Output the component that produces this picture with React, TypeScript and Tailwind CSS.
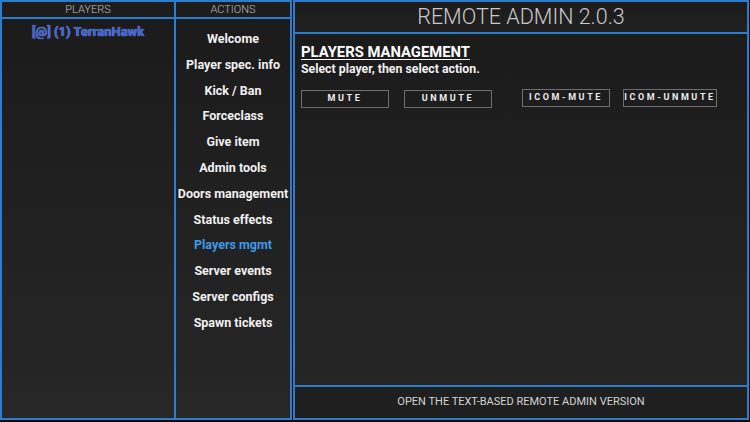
import React from 'react'

const actions = [
  'Welcome',
  'Player spec. info',
  'Kick / Ban',
  'Forceclass',
  'Give item',
  'Admin tools',
  'Doors management',
  'Status effects',
  'Players mgmt',
  'Server events',
  'Server configs',
  'Spawn tickets',
]

const ACTIVE = 'Players mgmt'

function MgmtButton({ label, className = '' }: { label: string; className?: string }) {
  return (
    <div
      className={`h-[18px] border border-[#6f6f6f] flex items-center justify-center whitespace-nowrap text-[9px] font-bold tracking-[2.6px] text-[#ececec] ${className}`}
    >
      {label}
    </div>
  )
}

export default function App() {
  return (
    <div className="w-[750px] h-[422px] bg-[#0b0b0b] flex font-['Roboto',sans-serif] overflow-hidden">
      {/* Players column */}
      <div className="w-[176px] h-[420px] flex flex-col">
        <div className="h-[19px] border-2 border-[#2d7dcd] bg-[#1d1d1d] flex items-center justify-center text-[11px] font-light text-[#bdbdbd] leading-none">
          PLAYERS
        </div>
        <div className="flex-1 border-2 border-t-0 border-[#2d7dcd] bg-linear-to-b from-[#1b1b1b] to-[#272727] pt-[5px]">
          <div className="text-center text-[13px] leading-4 font-bold text-[#3a62d9] [text-shadow:0_0_1px_#a9b9ff]">
            [@] (1) TerranHawk
          </div>
        </div>
      </div>

      {/* Actions column */}
      <div className="w-[116px] h-[420px] flex flex-col">
        <div className="h-[19px] border-2 border-l-0 border-[#2d7dcd] bg-[#1d1d1d] flex items-center justify-center text-[11px] font-light text-[#bdbdbd] leading-none">
          ACTIONS
        </div>
        <div className="flex-1 border-2 border-t-0 border-l-0 border-[#2d7dcd] bg-linear-to-b from-[#1b1b1b] to-[#272727] pt-[7px] flex flex-col items-center">
          {actions.map((a) => (
            <div
              key={a}
              className={`text-[12.5px] font-bold leading-[25.8px] whitespace-nowrap ${
                a === ACTIVE ? 'text-[#3d9be9]' : 'text-[#f0f0f0]'
              }`}
            >
              {a}
            </div>
          ))}
        </div>
      </div>

      {/* Main panel */}
      <div className="flex-1 ml-px mr-px h-[420px] flex flex-col">
        <div className="h-[34px] border-2 border-[#2d7dcd] bg-linear-to-b from-[#1b1b1b] to-[#222222] flex items-center justify-center text-[21.5px] font-light text-[#c9c9c9] leading-none">
          REMOTE ADMIN 2.0.3
        </div>
        <div className="flex-1 border-2 border-t-0 border-[#2d7dcd] bg-linear-to-b from-[#1b1b1b] to-[#262626] pl-[6px] pt-[10px]">
          <div className="text-[14.8px] leading-4 font-bold text-white underline underline-offset-2">
            PLAYERS MANAGEMENT
          </div>
          <div className="text-[12.3px] leading-[14px] font-bold text-[#f0f0f0] mt-[2px]">
            Select player, then select action.
          </div>
          <div className="flex items-start mt-[13px]">
            <MgmtButton label="MUTE" className="w-[88px] mt-px" />
            <MgmtButton label="UNMUTE" className="w-[88px] ml-[15px] mt-px" />
            <MgmtButton label="ICOM-MUTE" className="w-[88px] ml-[30px]" />
            <MgmtButton label="ICOM-UNMUTE" className="w-[94px] ml-[13px]" />
          </div>
        </div>
        <div className="h-[33px] border-2 border-t-0 border-[#2d7dcd] bg-[#1f1f1f] flex items-center justify-center text-[11px] text-[#d2d2d2]">
          OPEN THE TEXT-BASED REMOTE ADMIN VERSION
        </div>
      </div>
    </div>
  )
}
